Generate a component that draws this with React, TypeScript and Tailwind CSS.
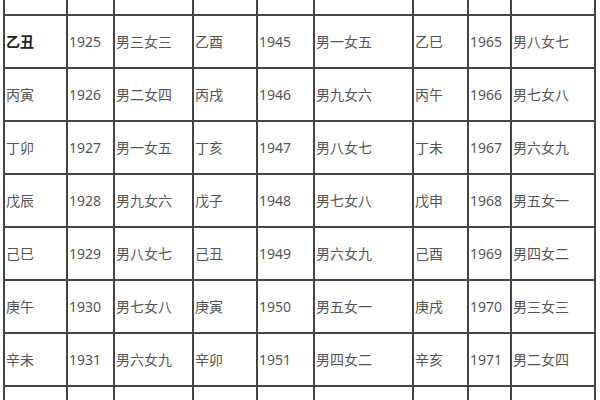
import React from "react";

const rows: string[][] = [
  ["甲子", "1924", "男四女二", "甲申", "1944", "男二女四", "甲辰", "1964", "男九女六"],
  ["乙丑", "1925", "男三女三", "乙酉", "1945", "男一女五", "乙巳", "1965", "男八女七"],
  ["丙寅", "1926", "男二女四", "丙戌", "1946", "男九女六", "丙午", "1966", "男七女八"],
  ["丁卯", "1927", "男一女五", "丁亥", "1947", "男八女七", "丁未", "1967", "男六女九"],
  ["戊辰", "1928", "男九女六", "戊子", "1948", "男七女八", "戊申", "1968", "男五女一"],
  ["己巳", "1929", "男八女七", "己丑", "1949", "男六女九", "己酉", "1969", "男四女二"],
  ["庚午", "1930", "男七女八", "庚寅", "1950", "男五女一", "庚戌", "1970", "男三女三"],
  ["辛未", "1931", "男六女九", "辛卯", "1951", "男四女二", "辛亥", "1971", "男二女四"],
  ["壬申", "1932", "男五女一", "壬辰", "1952", "男三女三", "壬子", "1972", "男一女五"],
];

export default function App() {
  return (
    <div className="w-[600px] h-[400px] overflow-hidden bg-white">
      <div
        className="ml-[3px] mt-[-39px] w-[593px] grid grid-cols-[61px_45px_77px_62px_55px_97px_53px_41px_82px] auto-rows-[51px] gap-[2px] p-[2px] bg-[#444444]"
        style={{ fontFamily: '"Noto Sans", "Noto Sans CJK SC", sans-serif' }}
      >
        {rows.map((r, ri) =>
          r.map((c, ci) => (
            <div
              key={`${ri}-${ci}`}
              className={`bg-white flex pl-[1px] text-[14px] leading-none whitespace-nowrap ${
                ri === 0 ? "items-end pb-[16px] text-[#aaaaaa]" : "items-center"
              } ${ri === 1 && ci === 0 ? "text-[#222] font-bold" : ri === 0 ? "" : "text-[#555555]"}`}
            >
              {c}
            </div>
          ))
        )}
      </div>
    </div>
  );
}
